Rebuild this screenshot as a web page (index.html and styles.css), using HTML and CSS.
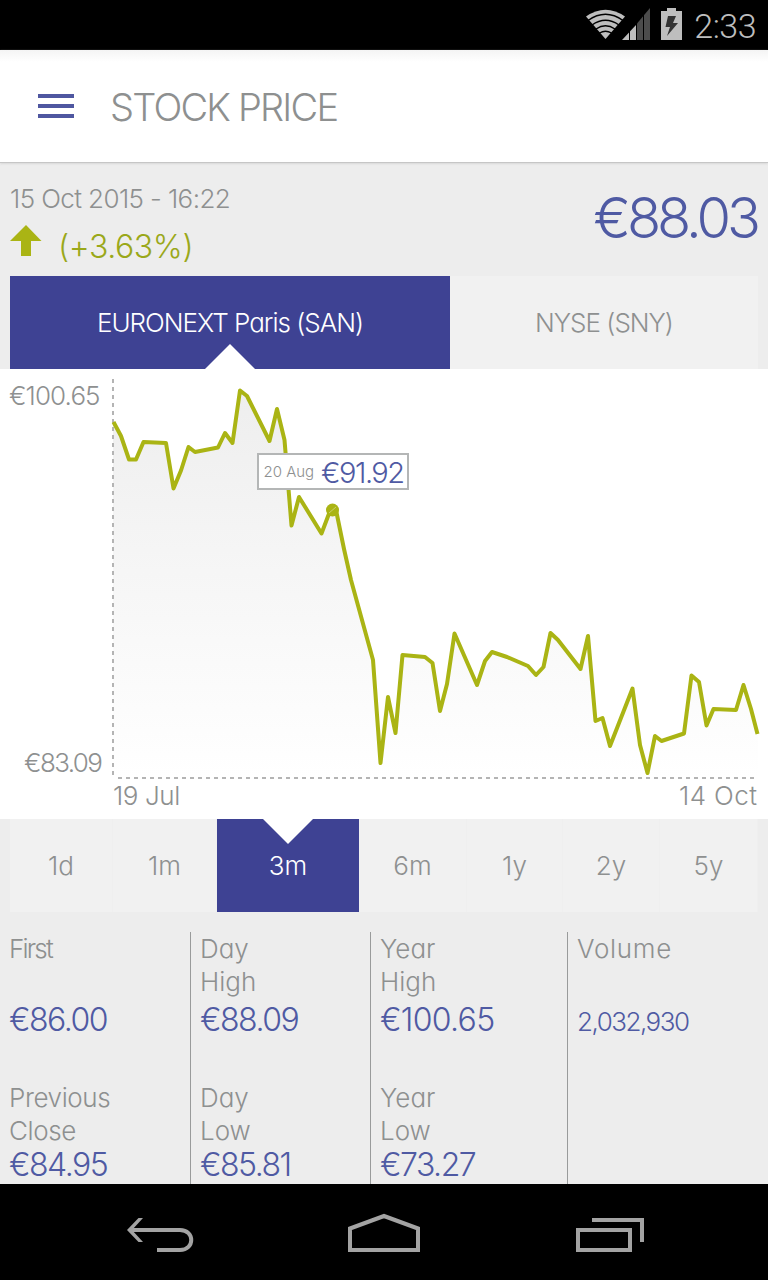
FILE: index.html
```
<!DOCTYPE html>
<html lang="en">

<head>
  <meta charset="UTF-8">
  <title>Stock Price</title>
  <meta name="viewport" content="width=device-width, initial-scale=1">
  <link rel="stylesheet" href="styles.css">
</head>

<body>
  <div id="app">

    <!-- Status bar -->
    <div class="status-bar">
      <svg width="100" height="50" viewBox="584 0 100 50">
        <path d="M605.5 39 L586 16.5 Q605.500 3 625 16.500 Z" fill="#bebebe" />
        <g fill="none" stroke="#000" stroke-width="1.400">
          <path d="M588 20.500 Q605.500 8 623 20.500" />
          <path d="M592 25 Q605.500 15.500 619 25" />
          <path d="M596 29 Q605.500 22.500 615 29" />
          <path d="M599.500 33 Q605.500 29.500 611.500 33" />
        </g>
        <path d="M622 40 L636 25 V40 Z" fill="#bebebe" />
        <path d="M637 40 V23.500 L650 8 V40 Z" fill="#4c4c4c" />
        <path d="M629.500 10 V40 M636.500 10 V40 M643.500 10 V40" stroke="#000" stroke-width="1" />
        <path d="M661 11 H667 V8 H676 V11 H682 V40 H661 Z" fill="#bebebe" />
        <path d="M668 16 H676 L673 23 H678 L667 36 L670 27 H665.500 Z" fill="#333" />
      </svg>
      <span class="clock">2:33</span>
    </div>

    <!-- Header -->
    <div class="header">
      <div class="menu-btn"><i></i><i></i><i></i></div>
      <h1>STOCK PRICE</h1>
    </div>

    <!-- Current price -->
    <div class="summary">
      <div>
        <p class="date">15 Oct 2015 - 16:22</p>
        <p class="change">
          <svg width="32" height="32" viewBox="0 0 32 32">
            <path d="M16 0 L31.500 16 H21 V31 H11 V16 H0 Z" fill="#aab414" />
          </svg>
          <span>(+3.63%)</span>
        </p>
      </div>
      <p class="price">€88.03</p>
    </div>

    <div class="markets">
      <div class="market selected">EURONEXT Paris (SAN)</div>
      <div class="market">NYSE (SNY)</div>
    </div>

    <!-- Chart -->
    <svg class="chart" width="768" height="450" viewBox="0 369 768 450">
      <defs>
        <linearGradient id="fade" x1="0" y1="390" x2="0" y2="777" gradientUnits="userSpaceOnUse">
          <stop offset="0" stop-color="#eeeeee" />
          <stop offset="1" stop-color="#ffffff" />
        </linearGradient>
      </defs>
      <path d="M113 777 V424 L121 436 129 459.500 136 459.500 143.500 442 166 443 173.500 488.500 181 470.500 188.500 447 195 452 218 447.500 225 433 232.500 443 240 390.500 247 396 269.500 441 277 409 284.500 440 291.500 525.500 299 497 321.500 533.500 330 511 336 510 344 549 351 580 373 660 380.500 763 388 697 395.500 733 402.500 655 425 657 432.500 663 440 711 447 684 454.500 633.500 477 685 485 661 492 652 507 657 528 666 536 675 543.500 667 550.500 633 558 640 580.500 669 588 636 595.500 721 602.500 718 610 746 632.500 688.500 640 745 647.500 773 655 736 661.500 741 684 733.500 691.500 675.500 699 682 706.500 725.500 713.500 709 736 710 743.500 685 751 709 758 734 V777 Z" fill="url(#fade)" />
      <path class="axis" d="M113 379 V777" />
      <path class="axis" d="M118 778 H757" />
      <path class="line" d="M113.500 422 L121 436 129 459.500 136 459.500 143.500 442 166 443 173.500 488.500 181 470.500 188.500 447 195 452 218 447.500 225 433 232.500 443 240 390.500 247 396 269.500 441 277 409 284.500 440 291.500 525.500 299 497 321.500 533.500 330 511 336 510 344 549 351 580 373 660 380.500 763 388 697 395.500 733 402.500 655 425 657 432.500 663 440 711 447 684 454.500 633.500 477 685 485 661 492 652 507 657 528 666 536 675 543.500 667 550.500 633 558 640 580.500 669 588 636 595.500 721 602.500 718 610 746 632.500 688.500 640 745 647.500 773 655 736 661.500 741 684 733.500 691.500 675.500 699 682 706.500 725.500 713.500 709 736 710 743.500 685 751 709 757.500 734" />
      <circle cx="332.500" cy="510" r="6.500" fill="#aab414" />
      <path d="M329 513 L336 507" stroke="#c9cf6a" stroke-width="1" />
      <rect x="258" y="454" width="150" height="35" fill="#fff" stroke="#b4b6b6" stroke-width="2" />
      <text class="tip-date" x="263.500" y="477">20 Aug</text>
      <text class="tip-price" x="321" y="483">€91.92</text>
      <text class="label" x="9" y="405">€100.65</text>
      <text class="label low" x="24" y="772">€83.09</text>
      <text class="label from" x="113" y="805">19 Jul</text>
      <text class="label to" x="679" y="805">14 Oct</text>
    </svg>

    <!-- Time range -->
    <div class="ranges">
      <div class="range">1d</div>
      <div class="range">1m</div>
      <div class="range selected">3m</div>
      <div class="range">6m</div>
      <div class="range">1y</div>
      <div class="range">2y</div>
      <div class="range">5y</div>
    </div>

    <!-- Figures -->
    <div class="figures">
      <div class="column">
        <div class="figure"><p class="first">First</p><b>€86.00</b></div>
        <div class="figure"><p class="previous">Previous<br>Close</p><b>€84.95</b></div>
      </div>
      <div class="column">
        <div class="figure"><p>Day<br>High</p><b>€88.09</b></div>
        <div class="figure"><p>Day<br>Low</p><b>€85.81</b></div>
      </div>
      <div class="column">
        <div class="figure"><p>Year<br>High</p><b class="year-high">€100.65</b></div>
        <div class="figure"><p>Year<br>Low</p><b>€73.27</b></div>
      </div>
      <div class="column">
        <div class="figure"><p class="wide">Volume</p><b class="volume">2,032,930</b></div>
      </div>
    </div>

    <!-- Navigation bar -->
    <div class="nav-bar">
      <svg width="768" height="96" viewBox="0 1184 768 96" fill="none" stroke="#a3a3a3" stroke-width="4">
        <path d="M129 1230 H180 C195 1230 195 1250 180 1250 H157" />
        <path d="M143 1218 H138.500 L127 1230 L138.500 1242 H143 L132 1230 Z" fill="#a3a3a3" stroke="none" />
        <path d="M350 1250 V1228.500 L384 1216 L418 1228.500 V1250 Z" />
        <path d="M578 1230 H630 V1250 H578 Z" />
        <path d="M592 1220 H642 V1242" />
      </svg>
    </div>

  </div>
</body>

</html>
```

FILE: styles.css
```
* {
  box-sizing: border-box;
  margin: 0;
  padding: 0;
}

body {
  background: #ededed;
  color: #8e9090;
  font-family: Inter, "Liberation Sans", sans-serif;
  font-weight: 300;
  font-size: 26px;
  font-feature-settings: "cv11";
}

#app {
  width: 768px;
  height: 1280px;
  display: flex;
  flex-direction: column;
  overflow: hidden;
}

.status-bar {
  display: flex;
  justify-content: flex-end;
  align-items: center;
  height: 50px;
  padding-right: 12px;
  background: #000;
}

.clock {
  margin-left: 10px;
  padding-top: 1px;
  color: #bebebe;
  font-family: Roboto, sans-serif;
  font-size: 34px;
  letter-spacing: -0.5px;
}

.header {
  display: flex;
  align-items: center;
  height: 113px;
  padding-left: 38px;
  background: linear-gradient(#f4f4f4, #fff 12px);
  border-bottom: 1px solid #c6c6c6;
  box-shadow: 0 1px 2px #d8d8d8;
}

.menu-btn {
  display: flex;
  flex-direction: column;
  gap: 6px;
  width: 36px;
}

.menu-btn i {
  height: 4px;
  background: #4f57a0;
}

h1 {
  margin-left: 36px;
  padding-top: 1px;
  font-size: 38px;
  font-weight: 300;
  letter-spacing: -1.800px;
}

.summary {
  display: flex;
  justify-content: space-between;
  height: 113px;
  padding: 20px 11px 0 10px;
}

.date {
  height: 32px;
  line-height: 32px;
  letter-spacing: -0.600px;
}

.change {
  display: flex;
  gap: 16px;
  margin-top: 10px;
  color: #9aa81a;
  font-size: 32px;
  line-height: 44px;
  letter-spacing: -0.400px;
}

.price {
  color: #4f5aa3;
  font-size: 56px;
  line-height: 70px;
  letter-spacing: -4px;
}

.markets {
  display: flex;
  height: 93px;
  padding: 0 10px;
}

.market {
  width: 308px;
  background: #f1f1f1;
  line-height: 93px;
  text-align: center;
  letter-spacing: -1px;
}

.selected {
  position: relative;
  background: #3e4293;
  color: #fff;
}

.market.selected {
  width: 440px;
}

/* white notch pointing away from the chart */
.selected::after {
  content: "";
  position: absolute;
  left: calc(50% - 25px);
  border: 25px solid transparent;
}

.market.selected::after {
  bottom: 0;
  border-top: 0;
  border-bottom-color: #fff;
}

.chart {
  display: block;
  flex: none;
  background: #fff;
}

.axis {
  stroke: #b4b4b4;
  stroke-width: 2;
  stroke-dasharray: 4 4;
}

.line {
  fill: none;
  stroke: #aab414;
  stroke-width: 4;
  stroke-linejoin: round;
}

.label,
.tip-date {
  fill: #8e9090;
  letter-spacing: -0.900px;
}

.low {
  letter-spacing: -1.600px;
}

.from {
  letter-spacing: -0.400px;
}

.to {
  letter-spacing: 0.400px;
}

.tip-date {
  font-size: 15px;
  letter-spacing: 0;
}

.tip-price {
  fill: #4f5aa3;
  font-size: 29px;
  letter-spacing: -1.500px;
}

.ranges {
  display: grid;
  grid-template-columns: 103px 104px 142px 108px 96px 97px 98px;
  height: 93px;
  padding: 0 10px;
}

.range {
  background: #f1f1f1;
  border-right: 1px solid #efefef;
  line-height: 93px;
  text-align: center;
}

.range.selected {
  background: #3e4293;
  border-right: 0;
}

.range.selected::after {
  top: 0;
  border-bottom: 0;
  border-top-color: #fff;
}

.figures {
  display: grid;
  grid-template-columns: 180px 180px 197px 191px;
  height: 252px;
  margin: 20px 10px 0;
}

.column {
  padding-left: 10px;
  border-left: 1px solid #999b9b;
}

.column:first-child {
  padding-left: 0;
  border-left: 0;
}

.figure p {
  height: 66px;
  margin-left: -1px;
  line-height: 33px;
}

.figure .first {
  letter-spacing: -1.800px;
}

.figure .previous {
  letter-spacing: -0.400px;
}

.figure .wide {
  letter-spacing: 0.700px;
}

.figure b {
  display: block;
  height: 83px;
  margin-left: -1px;
  color: #4f5aa3;
  font-size: 32px;
  font-weight: 300;
  line-height: 43px;
  letter-spacing: -1.500px;
}

.figure:last-child b {
  line-height: 35px;
}

.figure .year-high {
  letter-spacing: -0.700px;
}

.figure .volume,
.figure:last-child .volume {
  font-size: 26px;
  line-height: 47px;
}

.nav-bar {
  flex: none;
  height: 96px;
  background: #000;
}
```
